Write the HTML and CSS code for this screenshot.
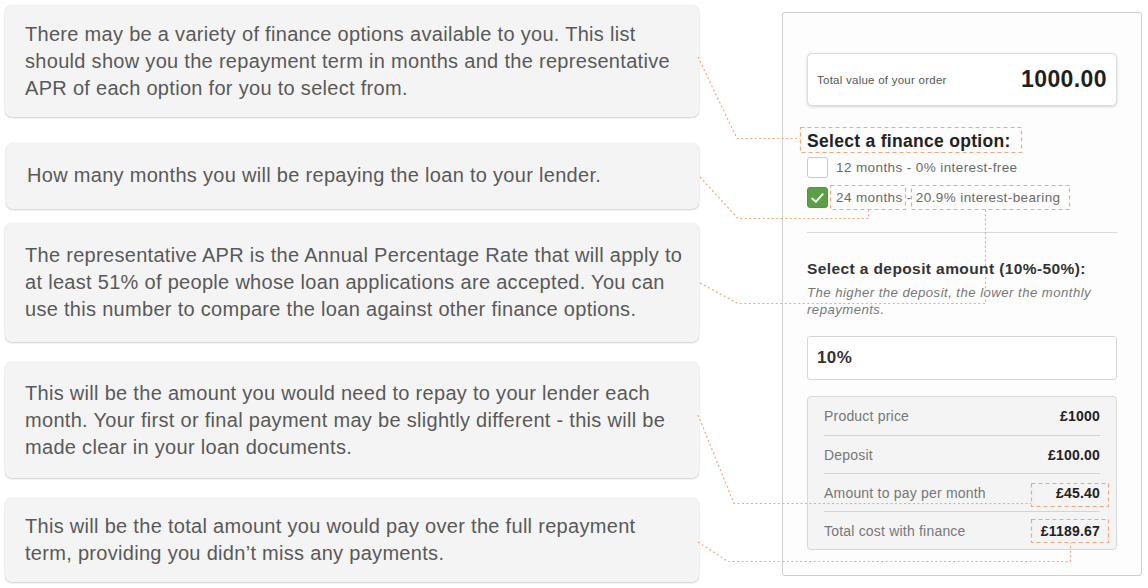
FILE: index.html
```html
<!DOCTYPE html>
<html lang="en">
<head>
<meta charset="utf-8">
<title>Finance options explained</title>
<link rel="stylesheet" href="styles.css">
</head>
<body>
<div class="page">
  <div class="notes">
    <div class="note note-1">There may be a variety of finance options available to you. This list should show you the repayment term in months and the representative APR of each option for you to select from.</div>
    <div class="note note-2">How many months you will be repaying the loan to your lender.</div>
    <div class="note note-3">The representative APR is the Annual Percentage Rate that will apply to at least 51% of people whose loan applications are accepted. You can use this number to compare the loan against other finance options.</div>
    <div class="note note-4">This will be the amount you would need to repay to your lender each month. Your first or final payment may be slightly different - this will be made clear in your loan documents.</div>
    <div class="note note-5">This will be the total amount you would pay over the full repayment term, providing you didn’t miss any payments.</div>
  </div>

  <div class="panel">
    <div class="total">
      <span class="total-label">Total value of your order</span>
      <span class="total-value">1000.00</span>
    </div>

    <h2 class="heading">Select a finance option:</h2>
    <div class="options">
      <label class="option"><span class="box"></span><span class="opt-text">12 months - 0% interest-free</span></label>
      <label class="option"><span class="box checked"><svg viewBox="0 0 20 20" width="20" height="20"><path d="M4.5 10.5 L8.2 14 L15.5 6" fill="none" stroke="#fff" stroke-width="2" stroke-linecap="round" stroke-linejoin="round"/></svg></span><span class="opt-text">24 months - 20.9% interest-bearing</span></label>
    </div>

    <hr class="divider">

    <h3 class="sub-heading">Select a deposit amount (10%-50%):</h3>
    <p class="hint">The higher the deposit, the lower the monthly repayments.</p>

    <div class="input">10%</div>

    <div class="summary">
      <div class="row"><span class="label">Product price</span><span class="value">£1000</span></div>
      <div class="row"><span class="label">Deposit</span><span class="value">£100.00</span></div>
      <div class="row"><span class="label">Amount to pay per month</span><span class="value">£45.40</span></div>
      <div class="row"><span class="label">Total cost with finance</span><span class="value">£1189.67</span></div>
    </div>
  </div>

  <svg class="overlay" width="1148" height="588" viewBox="0 0 1148 588">
    <g class="marks" fill="none" stroke="#f2a77d" stroke-width="1.2" stroke-dasharray="4 3">
      <rect x="800.5" y="127.5" width="221" height="25"/>
      <rect x="830.5" y="185.5" width="75" height="24"/>
      <rect x="911.5" y="185.5" width="158" height="24"/>
      <rect x="1031.5" y="483.5" width="77" height="23"/>
      <rect x="1031.5" y="519.5" width="77" height="23"/>
    </g>
    <g class="links" fill="none" stroke="#f2a77d" stroke-width="1.2" stroke-dasharray="2 2.5">
      <polyline points="698,57 737,138.5 800,138.5"/>
      <polyline points="700,177 738,218.5 868.5,218.5 868.5,210"/>
      <polyline points="700,283 738,303.5 985.5,303.5 985.5,210"/>
      <polyline points="698,415 734,503.5 1031,503.5"/>
      <polyline points="698,542 728,561.5 1070.5,561.5 1070.5,543"/>
    </g>
  </svg>
</div>
</body>
</html>
```

FILE: styles.css
```css
* { box-sizing: border-box; }

html, body {
  margin: 0;
  padding: 0;
  background: #ffffff;
}

body {
  font-family: "Liberation Sans", Arial, Helvetica, sans-serif;
  color: #555;
}

.page {
  position: relative;
  width: 1148px;
  height: 588px;
  display: flex;
  align-items: flex-start;
  padding: 5px 0 0 5px;
  overflow: hidden;
}

/* ---------- left callouts ---------- */
.notes {
  width: 694px;
  display: flex;
  flex-direction: column;
}

.note {
  background: #f4f4f4;
  border-radius: 7px;
  box-shadow: 0 1px 2px rgba(0, 0, 0, 0.18), 0 0 1px rgba(0, 0, 0, 0.12);
  font-size: 20px;
  line-height: 27px;
  letter-spacing: 0.3px;
  color: #595959;
  padding: 16px 12px 15px 20px;
}

.note-1 { height: 112px; }
.note-2 { height: 66px; margin-top: 26px; margin-left: 1px; padding: 19px 12px 19px 21px; }
.note-3 { height: 119px; margin-top: 14px; padding-top: 19px; }
.note-4 { height: 116px; margin-top: 20px; padding-top: 18px; }
.note-5 { height: 84px; margin-top: 20px; padding-top: 15px; }

/* ---------- right panel ---------- */
.panel {
  width: 360px;
  height: 564px;
  margin-left: 83px;
  margin-top: 7px;
  border: 1px solid #cfcfcf;
  border-radius: 3px;
  background: #fdfdfd;
  padding: 40px 24px 0 24px;
  display: flex;
  flex-direction: column;
}

.total {
  height: 53px;
  border: 1px solid #dcdcdc;
  border-radius: 5px;
  background: #fff;
  box-shadow: 0 1px 3px rgba(0, 0, 0, 0.16);
  display: flex;
  align-items: center;
  justify-content: space-between;
  padding: 0 9px 0 9px;
}

.total-label {
  font-size: 11.5px;
  color: #555;
  letter-spacing: 0.25px;
}

.total-value {
  font-size: 23px;
  font-weight: bold;
  letter-spacing: 0.4px;
  color: #1f1f1f;
}

.heading {
  margin: 25px 0 0 0;
  font-size: 17.5px;
  line-height: 20px;
  letter-spacing: 0.3px;
  font-weight: bold;
  color: #222;
}

.options {
  margin-top: 6px;
  display: flex;
  flex-direction: column;
  gap: 9px;
}

.option {
  display: flex;
  align-items: center;
  gap: 8px;
  height: 21px;
}

.box {
  width: 21px;
  height: 21px;
  border: 1px solid #c9c9c9;
  border-radius: 3px;
  background: #fff;
  display: flex;
  align-items: center;
  justify-content: center;
  flex: none;
}

.box.checked {
  background: #5b9f47;
  border-color: #54933f;
}

.opt-text {
  font-size: 13.5px;
  letter-spacing: 0.4px;
  color: #6a6a6a;
}

.divider {
  border: 0;
  border-top: 1px solid #dadada;
  margin: 24px 0 0 0;
  height: 0;
}

.sub-heading {
  margin: 27px 0 0 0;
  font-size: 15.5px;
  line-height: 18px;
  letter-spacing: 0.4px;
  font-weight: bold;
  color: #333;
}

.hint {
  margin: 6px 0 0 0;
  font-size: 13.2px;
  line-height: 17px;
  letter-spacing: 0.45px;
  font-style: italic;
  color: #777;
}

.input {
  margin-top: 18px;
  height: 44px;
  border: 1px solid #d6d6d6;
  border-radius: 3px;
  background: #fff;
  display: flex;
  align-items: center;
  padding-left: 9px;
  font-size: 17px;
  letter-spacing: 0.4px;
  font-weight: bold;
  color: #333;
}

.summary {
  margin-top: 16px;
  height: 154px;
  border: 1px solid #d8d8d8;
  border-radius: 4px;
  background: #f4f4f4;
  padding: 0 16px;
  display: flex;
  flex-direction: column;
}

.row {
  height: 38px;
  display: flex;
  align-items: center;
  justify-content: space-between;
  border-top: 1px solid #d4d4d4;
}

.row:first-child { border-top: 0; height: 38px; }

.label {
  font-size: 14px;
  letter-spacing: 0.2px;
  color: #777;
}

.value {
  font-size: 14px;
  letter-spacing: 0.2px;
  font-weight: bold;
  color: #222;
}

/* ---------- annotation overlay ---------- */
.overlay {
  position: absolute;
  left: 0;
  top: 0;
  pointer-events: none;
}
```
